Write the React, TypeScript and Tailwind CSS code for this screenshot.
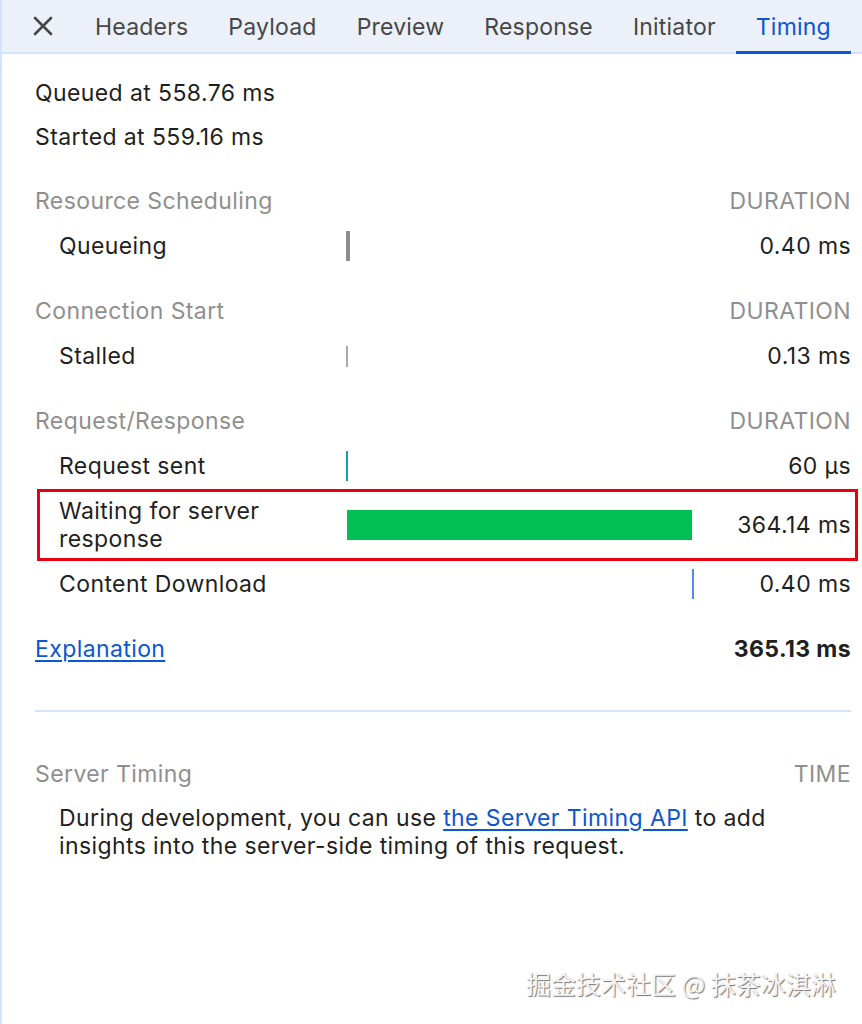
import React from 'react'

type Phase = {
  label: string
  duration: string
  left: number
  width: number
  color: string
  height: string
  highlight?: boolean
}

type Section = {
  title: string
  rows: Phase[]
}

const TABS = ['Headers', 'Payload', 'Preview', 'Response', 'Initiator', 'Timing']

const SECTIONS: Section[] = [
  {
    title: 'Resource Scheduling',
    rows: [{ label: 'Queueing', duration: '0.40 ms', left: 0, width: 4, color: '#8e8e8e', height: 'h-[30px]' }],
  },
  {
    title: 'Connection Start',
    rows: [{ label: 'Stalled', duration: '0.13 ms', left: 0, width: 1.5, color: '#a8a8a8', height: 'h-[21px]' }],
  },
  {
    title: 'Request/Response',
    rows: [
      { label: 'Request sent', duration: '60 µs', left: 0, width: 2, color: '#1c98b0', height: 'h-[30px]' },
      {
        label: 'Waiting for server response',
        duration: '364.14 ms',
        left: 1,
        width: 345,
        color: '#00bf53',
        height: 'h-[30px]',
        highlight: true,
      },
      { label: 'Content Download', duration: '0.40 ms', left: 346, width: 2, color: '#4c8df6', height: 'h-[30px]' },
    ],
  },
]

const font = "font-['Inter','Liberation_Sans',sans-serif]"

// the little X that closes the drawer
const CloseIcon = () => (
  <svg width="20" height="20" viewBox="0 0 20 20" fill="none">
    <path d="M2 2L18 18M18 2L2 18" stroke="#474747" strokeWidth="2.6" strokeLinecap="round" />
  </svg>
)

const Bar = ({ row }: { row: Phase }) => (
  <div className="flex items-center h-full">
    <div
      className={row.height}
      style={{ marginLeft: row.left, width: row.width, backgroundColor: row.color }}
    ></div>
  </div>
)

const TimingRow = ({ row }: { row: Phase }) => {
  if (row.highlight) {
    return (
      <div className="ml-[2px] -mr-[7px] h-[72px] border-[3px] border-[#e8000f] grid grid-cols-[306px_350px_1fr] items-center pr-[4px]">
        <div className="pl-[19px] leading-[28px] max-w-[250px]">{row.label}</div>
        <Bar row={row} />
        <div className="text-right">{row.duration}</div>
      </div>
    )
  }
  return (
    <div className="h-[46px] grid grid-cols-[311px_350px_1fr] items-center">
      <div className="pl-[24px]">{row.label}</div>
      <Bar row={row} />
      <div className="text-right">{row.duration}</div>
    </div>
  )
}

const SectionHeader = ({ title, right }: { title: string; right: string }) => (
  <div className="h-[44px] flex items-center justify-between text-[#8f8f8f]">
    <span>{title}</span>
    <span>{right}</span>
  </div>
)

export default function App() {
  return (
    <div className={`relative flex h-[1024px] w-[862px] bg-white text-[23px] tracking-[0.4px] text-[#1f1f1f] ${font}`}>
      <div className="w-[2px] shrink-0 bg-[#d3e3fd]"></div>

      <div className="flex-1 flex flex-col">
        {/* Tab strip */}
        <div className="h-[54px] shrink-0 flex items-stretch bg-[#ebf0f9] border-b-2 border-[#d3e3fd]">
          <div className="pl-[31px] pr-[22px] flex items-center">
            <CloseIcon />
          </div>
          {TABS.map((tab) => (
            <div
              key={tab}
              className={`px-[20px] pt-[3px] flex items-center tracking-[0.2px] border-b-[3px] -mb-[2px] ${
                tab === 'Timing' ? 'text-[#0b57d0] border-[#0b57d0]' : 'text-[#474747] border-transparent'
              }`}
            >
              {tab}
            </div>
          ))}
        </div>

        {/* Timing body */}
        <div className="pl-[33px] pr-[11px] pt-[17px]">
          <div className="h-[44px] flex items-center">Queued at 558.76 ms</div>
          <div className="h-[44px] flex items-center">Started at 559.16 ms</div>

          {SECTIONS.map((section) => (
            <div key={section.title} className="mt-[20px]">
              <SectionHeader title={section.title} right="DURATION" />
              {section.rows.map((row) => (
                <TimingRow key={row.label} row={row} />
              ))}
            </div>
          ))}

          <div className="mt-[20px] h-[44px] flex items-center justify-between">
            <a href="#" className="text-[#0b57d0] underline underline-offset-[3px]">
              Explanation
            </a>
            <span className="font-bold">365.13 ms</span>
          </div>

          <div className="mt-[39px] h-[2px] bg-[#d6e4fb]"></div>

          <div className="mt-[40px]">
            <SectionHeader title="Server Timing" right="TIME" />
            <div className="pl-[24px] pt-[8px]">
              <p className="max-w-[745px] leading-[28px]">
                During development, you can use{' '}
                <a href="#" className="text-[#0b57d0] underline underline-offset-[3px]">
                  the Server Timing API
                </a>{' '}
                to add insights into the server-side timing of this request.
              </p>
            </div>
          </div>
        </div>
      </div>

      {/* watermark */}
      <div className="absolute left-[526px] top-[965px] text-[25px] tracking-normal text-[#f4f4f4] font-['Noto_Sans_CJK_SC',sans-serif] [text-shadow:1px_1px_1px_rgba(0,0,0,0.55)]">
        掘金技术社区 @ 抹茶冰淇淋
      </div>
    </div>
  )
}
